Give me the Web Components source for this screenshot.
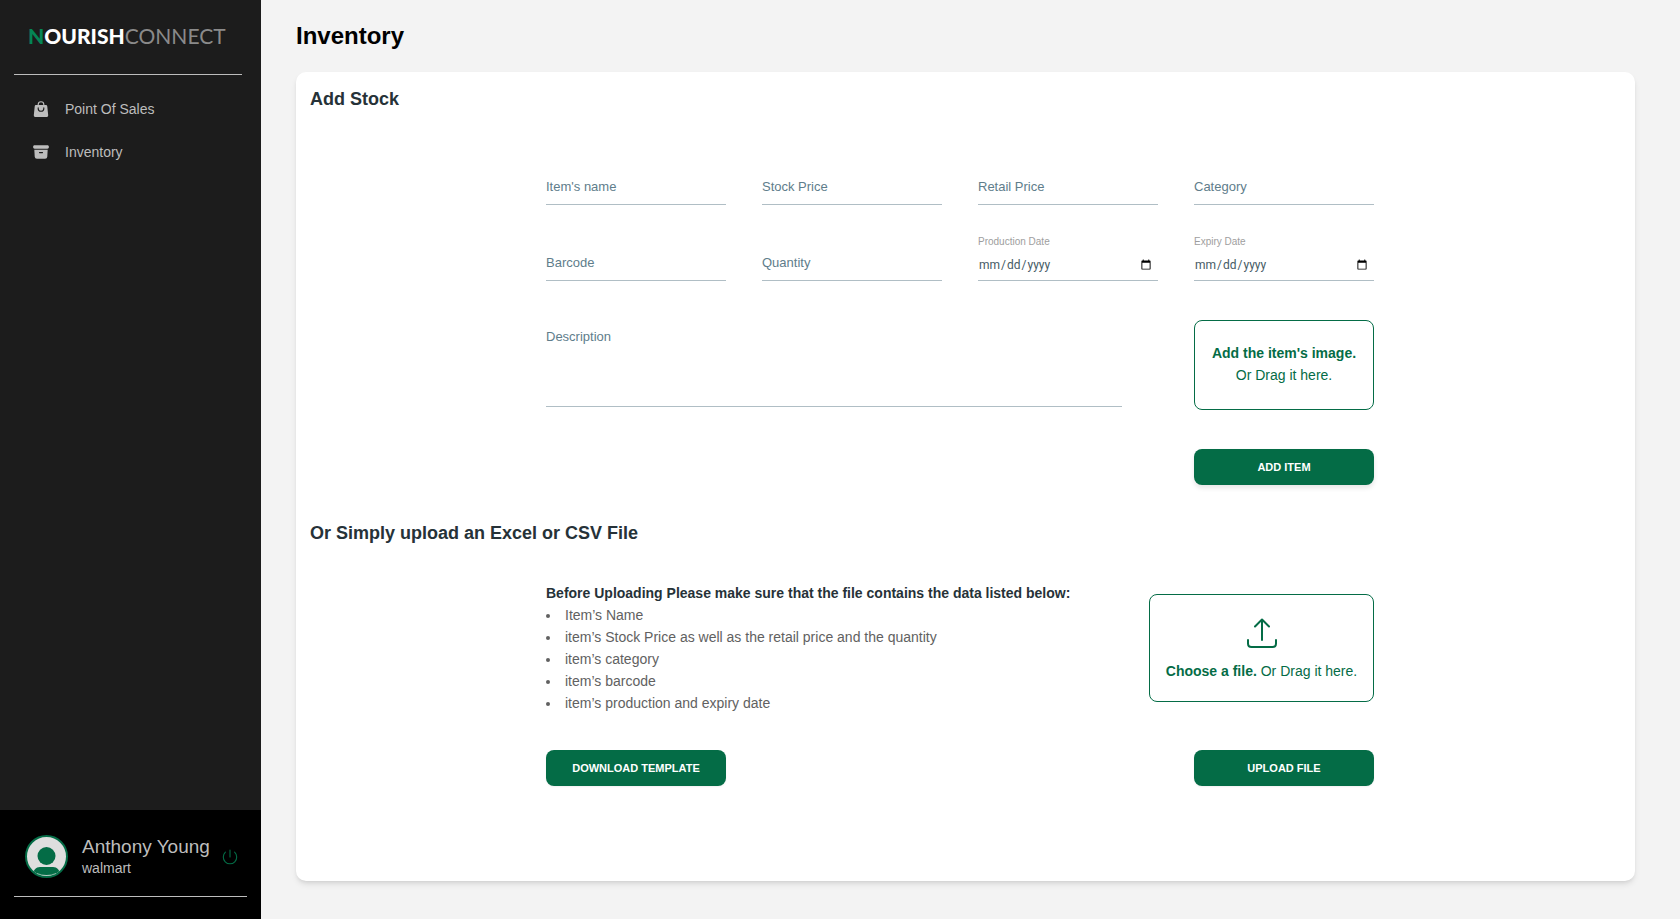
<!DOCTYPE html>
<html lang="en">
<head>
<meta charset="utf-8">
<meta name="viewport" content="width=device-width, initial-scale=1">
<title>NourishConnect - Inventory</title>
<style>
  :root {
    --green: #046c46;
    --ink: #263238;
    --muted: #616161;
    --label: #607d8b;
    --rule: #b0bec5;
  }
  body {
    margin: 0;
    background: #f3f3f3;
    font-family: "Liberation Sans", Arial, sans-serif;
    font-size: 14px;
    color: var(--muted);
  }
</style>
</head>
<body>
<nc-app>
  <nc-sidebar slot="sidebar">
    <nc-nav-item label="Point Of Sales">
      <svg slot="icon" width="18" height="18" viewBox="0 0 24 24" fill="currentColor"><path fill-rule="evenodd" d="M7.5 6v.75H5.513c-.96 0-1.764.724-1.865 1.679l-1.263 12A1.875 1.875 0 0 0 4.25 22.5h15.5a1.875 1.875 0 0 0 1.865-2.071l-1.263-12a1.875 1.875 0 0 0-1.865-1.679H16.5V6a4.5 4.5 0 1 0-9 0ZM12 3a3 3 0 0 0-3 3v.75h6V6a3 3 0 0 0-3-3Zm-3 8.25a3 3 0 1 0 6 0v-.75a.75.75 0 0 1 1.5 0v.75a4.5 4.5 0 1 1-9 0v-.75a.75.75 0 0 1 1.5 0v.75Z"/></svg>
    </nc-nav-item>
    <nc-nav-item label="Inventory">
      <svg slot="icon" width="18" height="18" viewBox="0 0 24 24" fill="currentColor"><path d="M3.375 3C2.339 3 1.5 3.84 1.5 4.875v.75c0 1.036.84 1.875 1.875 1.875h17.25c1.035 0 1.875-.84 1.875-1.875v-.75C22.5 3.839 21.66 3 20.625 3H3.375Z"/><path fill-rule="evenodd" d="m3.087 9 .54 9.176A3 3 0 0 0 6.62 21h10.757a3 3 0 0 0 2.995-2.824L20.913 9H3.087Zm6.163 3.75A.75.75 0 0 1 10 12h4a.75.75 0 0 1 0 1.5h-4a.75.75 0 0 1-.75-.75Z"/></svg>
    </nc-nav-item>
    <nc-user-panel slot="footer" name="Anthony Young" store="walmart"></nc-user-panel>
  </nc-sidebar>
  <nc-stock-form></nc-stock-form>
  <nc-file-import></nc-file-import>
</nc-app>

<script>
const define = (name, html) => customElements.define(name, class extends HTMLElement {
  constructor() {
    super();
    const root = this.attachShadow({ mode: 'open' });
    const template = document.createElement('template');
    template.innerHTML = (typeof html === 'function' ? html(this) : html);
    root.append(template.content.cloneNode(true));
  }
});

define('nc-app', `
  <style>
    :host { display: grid; grid-template-columns: 261px minmax(0, 1fr); min-height: 100vh; }
    main { display: flex; flex-direction: column; padding: 20px 45px 38px 35px; }
    h1 { margin: 0 0 20px; font-size: 24px; line-height: 32px; color: #000; }
    .card { flex: 1; background: #fff; border-radius: 10px; padding: 16px 25px 24px 14px;
      box-shadow: 0 4px 6px -1px rgb(0 0 0 / .1), 0 2px 4px -2px rgb(0 0 0 / .1); }
  </style>
  <slot name="sidebar"></slot>
  <main><h1>Inventory</h1><div class="card"><slot></slot></div></main>`);

define('nc-logo', `
  <style>
    :host { display: block; font-family: Lato, sans-serif; font-size: 21px; line-height: 24px; white-space: nowrap; }
    .n { color: #058555; }
    b { font-weight: 900; color: #fff; }
    .thin { color: #8a8a8a; font-weight: 400; }
  </style>
  <b><span class="n">N</span>OURISH</b><span class="thin">CONNECT</span>`);

define('nc-sidebar', `
  <style>
    :host { display: flex; flex-direction: column; background: #1c1c1c; color: #bdbdbd; }
    nc-logo { padding: 24px 0 26px 28px; }
    hr { margin: 0 19px 0 14px; border: 0; height: 1px; background: #bdbdbd; }
    nav { flex: 1; padding-top: 12px; }
  </style>
  <nc-logo></nc-logo><hr><nav><slot></slot></nav><slot name="footer"></slot>`);

define('nc-nav-item', el => `
  <style>
    :host { display: block; }
    a { display: flex; align-items: center; gap: 15px; height: 43px; padding-left: 32px; color: inherit; text-decoration: none; font-size: 14px; }
    ::slotted(svg) { display: block; }
  </style>
  <a href="#"><slot name="icon"></slot><span>${el.getAttribute('label')}</span></a>`);

define('nc-user-panel', el => `
  <style>
    :host { display: block; background: #000; padding: 25px 14px 22px; color: #bdbdbd; }
    .row { display: flex; align-items: center; padding-left: 11px; margin-bottom: 18px; }
    .who { margin-left: 14px; white-space: nowrap; }
    .name { font-size: 19px; line-height: 24px; }
    .store { font-size: 14px; line-height: 19px; }
    button { display: block; margin-left: auto; margin-right: 9px; padding: 0; border: 0; background: none; color: var(--green); }
    svg { display: block; }
    hr { margin: 0; border: 0; height: 1px; background: #bdbdbd; }
  </style>
  <div class="row">
    <svg width="43" height="43" viewBox="0 0 43 43" aria-hidden="true">
      <clipPath id="disc"><circle cx="21.500" cy="21.500" r="19.500"/></clipPath>
      <circle cx="21.500" cy="21.500" r="20.500" fill="#dedede" stroke="#046c46" stroke-width="2"/>
      <circle cx="21.500" cy="21" r="9" fill="#046c46"/>
      <path clip-path="url(#disc)" fill="#046c46" d="M8 40c0-5 3-8 7-8h13c4 0 7 3 7 8z"/>
      <path d="M12 38.500q9.500 4 19 0" fill="none" stroke="#9fc4b4" stroke-width=".8"/>
    </svg>
    <div class="who"><div class="name">${el.getAttribute('name')}</div><div class="store">${el.getAttribute('store')}</div></div>
    <button type="button" aria-label="Log out">
      <svg width="16" height="16" viewBox="0 0 16 16" fill="none" stroke="currentColor" stroke-width="1.100" stroke-linecap="round"><path d="M8 1v7M3.400 3.200a6.700 6.700 0 1 0 9.200 0"/></svg>
    </button>
  </div>
  <hr>`);

define('nc-field', el => {
  const label = el.getAttribute('label');
  const kind = el.getAttribute('kind') || 'text';
  const control = kind === 'area'
    ? `<textarea id="f" placeholder="${label}" aria-label="${label}"></textarea>`
    : kind === 'date'
      ? `<label for="f">${label}</label><input id="f" type="date">`
      : `<input id="f" type="text" placeholder="${label}" aria-label="${label}">`;
  return `
  <style>
    :host { display: block; min-width: 0; }
    input, textarea { display: block; box-sizing: border-box; width: 100%; height: 44px; margin: 0; padding: 15px 0 8px; border: 0;
      border-bottom: 1px solid var(--rule); border-radius: 0; background: none; outline: 0; resize: none;
      font: 13px/20px "Liberation Sans", Arial, sans-serif; color: #455a64; }
    textarea { height: 94px; padding-top: 14px; }
    ::placeholder { color: var(--label); opacity: 1; }
    label { display: block; font-size: 10px; line-height: 10px; color: #9e9e9e; }
    input[type=date] { height: 34px; padding: 8px 4px 6px 0; font-family: Roboto, sans-serif; font-size: 12px; }
  </style>${control}`;
});

define('nc-button', `
  <style>
    :host { display: block; }
    button { display: block; width: 100%; height: 36px; padding: 0; border: 0; border-radius: 8px; background: var(--green); color: #fff;
      font: bold 11px/16px "Liberation Sans", Arial, sans-serif; text-transform: uppercase;
      box-shadow: 0 3px 5px rgb(0 0 0 / .1); }
    :host([flat]) button { box-shadow: 0 1px 2px rgb(0 0 0 / .06); }
  </style>
  <button type="button"><slot></slot></button>`);

define('nc-dropzone', `
  <style>
    :host { display: block; }
    label { display: flex; flex-direction: column; align-items: center; justify-content: center; box-sizing: border-box; height: 100%;
      border: 1px solid var(--green); border-radius: 8px; padding-bottom: 2px; color: var(--green); font-size: 14px; line-height: 22px; text-align: center; white-space: nowrap; }
    input { position: absolute; width: 1px; height: 1px; opacity: 0; }
    :host([tall]) label { padding: 4px 0 0; }
    ::slotted(svg) { display: block; margin-bottom: 12px; }
  </style>
  <label for="file"><slot name="icon"></slot><span><slot></slot></span></label><input type="file" id="file">`);

define('nc-stock-form', `
  <style>
    :host { display: block; }
    h2 { margin: 0; font-size: 18px; line-height: 22px; color: var(--ink); }
    form { display: grid; grid-template-columns: repeat(4, minmax(0, 1fr)); gap: 32px 36px; max-width: 828px; margin: 51px auto 0; }
    .desc { grid-column: span 3; margin-right: 36px; }
    .drop { height: 90px; margin-top: 7px; }
    .add { grid-column: 4; margin-top: 7px; }
  </style>
  <h2>Add Stock</h2>
  <form>
    <nc-field label="Item's name"></nc-field>
    <nc-field label="Stock Price"></nc-field>
    <nc-field label="Retail Price"></nc-field>
    <nc-field label="Category"></nc-field>
    <nc-field label="Barcode"></nc-field>
    <nc-field label="Quantity"></nc-field>
    <nc-field label="Production Date" kind="date"></nc-field>
    <nc-field label="Expiry Date" kind="date"></nc-field>
    <nc-field class="desc" label="Description" kind="area"></nc-field>
    <nc-dropzone class="drop"><b>Add the item's image.</b><br>Or Drag it here.</nc-dropzone>
    <nc-button class="add">Add Item</nc-button>
  </form>`);

define('nc-file-import', `
  <style>
    :host { display: block; margin-top: 37px; }
    h2 { margin: 0; font-size: 18px; line-height: 22px; color: var(--ink); }
    .body { max-width: 828px; margin: 38px auto 0; }
    .row { display: flex; justify-content: space-between; }
    h3 { margin: 0; font-size: 14px; line-height: 22px; color: var(--ink); }
    ul { margin: 0; padding: 0; list-style: disc inside; line-height: 22px; }
    .drop { width: 225px; height: 108px; margin-top: 12px; }
    .actions { margin-top: 36px; }
    nc-button { width: 180px; }
  </style>
  <h2>Or Simply upload an Excel or CSV File</h2>
  <div class="body">
    <div class="row">
      <div>
        <h3>Before Uploading Please make sure that the file contains the data listed below:</h3>
        <ul>
          <li>Item’s Name</li>
          <li>item’s Stock Price as well as the retail price and the quantity</li>
          <li>item’s category</li>
          <li>item’s barcode</li>
          <li>item’s production and expiry date</li>
        </ul>
      </div>
      <nc-dropzone class="drop" tall>
        <svg slot="icon" width="30" height="30" viewBox="0 0 30 30" fill="none" stroke="currentColor" stroke-width="2" stroke-linecap="round" stroke-linejoin="round"><path d="M15 22V1.500M8 8.500l7-7 7 7M1 22v3.500q0 3.500 3.500 3.500h21q3.500 0 3.500-3.500V22"/></svg>
        <b>Choose a file.</b> Or Drag it here.
      </nc-dropzone>
    </div>
    <div class="row actions">
      <nc-button flat>Download Template</nc-button>
      <nc-button flat>Upload File</nc-button>
    </div>
  </div>`);
</script>
</body>
</html>
